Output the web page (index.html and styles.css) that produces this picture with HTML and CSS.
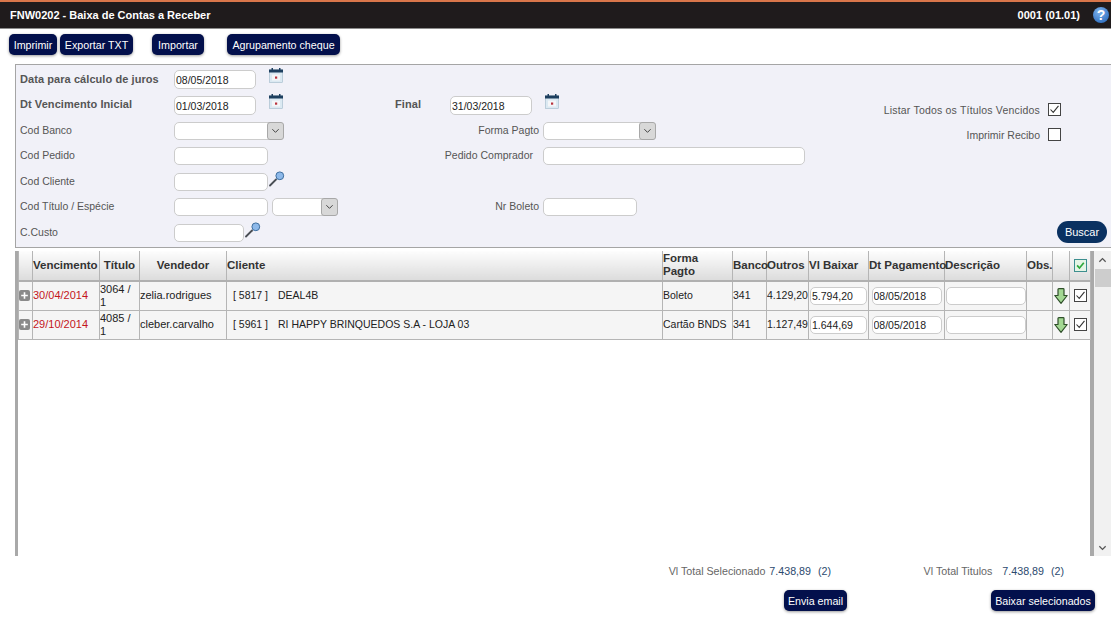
FILE: index.html
```html
<!DOCTYPE html>
<html lang="pt-BR">
<head>
<meta charset="UTF-8">
<meta name="viewport" content="width=device-width, initial-scale=1.0">
<title>FNW0202 - Baixa de Contas a Receber</title>
<link rel="stylesheet" href="styles.css">
</head>
<body>
<svg class="sprites" width="0" height="0">
    <symbol id="i-cal" viewBox="0 0 14 15">
        <rect x="0.5" y="2" width="13" height="12.5" fill="#dbe9f2" stroke="#9fb8c8" stroke-width="0.6"/>
        <rect x="0" y="1.5" width="14" height="3" fill="#1d3f5f"/>
        <rect x="2.5" y="0" width="1.5" height="2" fill="#1d3f5f"/>
        <rect x="10" y="0" width="1.5" height="2" fill="#1d3f5f"/>
        <rect x="3" y="6.5" width="8" height="6" fill="#f4f6f8"/>
        <rect x="6" y="8.5" width="2.2" height="2.2" fill="#b8323c"/>
    </symbol>
    <symbol id="i-lupa" viewBox="0 0 16 16">
        <path d="M1 14.5 L7 8.5" stroke="#4a4f55" stroke-width="1.8" stroke-linecap="round"/>
        <circle cx="10.8" cy="4.8" r="3.9" fill="#8db9ea" stroke="#3f6f9f" stroke-width="1"/>
    </symbol>
    <symbol id="i-check" viewBox="0 0 13 13">
        <path d="M1.8 6.5 L5 10 L11.2 2.2" fill="none" stroke="#333" stroke-width="1.3"/>
    </symbol>
    <symbol id="i-check-green" viewBox="0 0 13 13">
        <path d="M2.5 6.3 L5.3 9.4 L10.4 3.2" fill="none" stroke="#2fa83a" stroke-width="2"/>
    </symbol>
    <symbol id="i-down" viewBox="0 0 14 16">
        <path d="M4 1.5 Q4 0.7 4.8 0.7 H9.2 Q10 0.7 10 1.5 V7.5 H13.2 L7 15.3 L0.8 7.5 H4 Z" fill="#a3d893" stroke="#2f4f2a" stroke-width="1.2" stroke-linejoin="round"/>
    </symbol>
    <symbol id="i-plus" viewBox="0 0 11 11">
        <rect width="11" height="11" rx="2" fill="#8a8a8a"/>
        <path d="M5.5 2.2 V8.8 M2.2 5.5 H8.8" stroke="#fff" stroke-width="1.6"/>
    </symbol>
</svg>

<header class="topbar">
    <span class="topbar-title">FNW0202 - Baixa de Contas a Receber</span>
    <span class="topbar-right">
        <span>0001 (01.01)</span>
        <span class="help">?</span>
    </span>
</header>

<div class="toolbar">
    <button class="btn w-imprimir">Imprimir</button>
    <button class="btn w-exportar">Exportar TXT</button>
    <button class="btn gap-a">Importar</button>
    <button class="btn gap-b">Agrupamento cheque</button>
</div>

<section class="filters">
    <div class="form">
        <div class="row">
            <label class="lbl strong">Data para cálculo de juros</label>
            <input class="inp w-date" type="text" value="08/05/2018">
            <svg class="ico-cal"><use href="#i-cal"/></svg>
        </div>
        <div class="row">
            <label class="lbl strong">Dt Vencimento Inicial</label>
            <input class="inp w-date" type="text" value="01/03/2018">
            <svg class="ico-cal"><use href="#i-cal"/></svg>
            <label class="lbl-final strong">Final</label>
            <input class="inp w-date" type="text" value="31/03/2018">
            <svg class="ico-cal"><use href="#i-cal"/></svg>
        </div>
        <div class="row">
            <label class="lbl">Cod Banco</label>
            <span class="cell-left">
                <span class="combo w-combo"><select></select><span class="combo-btn"><svg viewBox="0 0 10 6"><path d="M1.5 1 L5 4.5 L8.5 1" fill="none" stroke="#333"/></svg></span></span>
            </span>
            <label class="lbl-right">Forma Pagto</label>
            <span class="combo w-combo-2"><select></select><span class="combo-btn"><svg viewBox="0 0 10 6"><path d="M1.5 1 L5 4.5 L8.5 1" fill="none" stroke="#333"/></svg></span></span>
        </div>
        <div class="row">
            <label class="lbl">Cod Pedido</label>
            <span class="cell-left"><input class="inp w-code" type="text"></span>
            <label class="lbl-right pad-10">Pedido Comprador</label>
            <input class="inp w-wide" type="text">
        </div>
        <div class="row">
            <label class="lbl">Cod Cliente</label>
            <input class="inp w-code" type="text">
            <svg class="ico-lupa"><use href="#i-lupa"/></svg>
        </div>
        <div class="row">
            <label class="lbl">Cod Título / Espécie</label>
            <span class="cell-left">
                <input class="inp w-code" type="text">
                <span class="combo w-combo-3"><select></select><span class="combo-btn"><svg viewBox="0 0 10 6"><path d="M1.5 1 L5 4.5 L8.5 1" fill="none" stroke="#333"/></svg></span></span>
            </span>
            <label class="lbl-right">Nr Boleto</label>
            <input class="inp w-code" type="text">
        </div>
        <div class="row">
            <label class="lbl">C.Custo</label>
            <input class="inp w-cc" type="text">
            <svg class="ico-lupa"><use href="#i-lupa"/></svg>
        </div>
    </div>
    <div class="side">
        <div class="side-row">
            <span class="wide-text">Listar Todos os Títulos Vencidos</span>
            <span class="chk"><svg><use href="#i-check"/></svg></span>
        </div>
        <div class="side-row">
            <span>Imprimir Recibo</span>
            <span class="chk"></span>
        </div>
        <button class="btn-buscar">Buscar</button>
    </div>
</section>

<section class="grid-area">
    <div class="grid-box">
        <table class="grid">
            <colgroup>
                <col class="c-exp"><col class="c-venc"><col class="c-tit"><col class="c-vend"><col class="c-cli">
                <col class="c-forma"><col class="c-banco"><col class="c-outros"><col class="c-baixar"><col class="c-dt">
                <col class="c-desc"><col class="c-obs"><col class="c-seta"><col class="c-sel">
            </colgroup>
            <thead>
                <tr>
                    <th></th>
                    <th>Vencimento</th>
                    <th class="center">Título</th>
                    <th class="center">Vendedor</th>
                    <th>Cliente</th>
                    <th class="wrap">Forma Pagto</th>
                    <th>Banco</th>
                    <th>Outros</th>
                    <th>Vl Baixar</th>
                    <th>Dt Pagamento</th>
                    <th>Descrição</th>
                    <th>Obs.</th>
                    <th></th>
                    <th class="center"><span class="chk chk-head"><svg><use href="#i-check-green"/></svg></span></th>
                </tr>
            </thead>
            <tbody>
                <tr>
                    <td class="center"><svg class="ico-plus"><use href="#i-plus"/></svg></td>
                    <td class="late big">30/04/2014</td>
                    <td class="big">3064 / 1</td>
                    <td class="big">zelia.rodrigues</td>
                    <td class="cli"><span class="cli-cod">[ 5817 ]</span>DEAL4B</td>
                    <td>Boleto</td>
                    <td>341</td>
                    <td>4.129,20</td>
                    <td class="center"><input class="inp inp-cell w-baixar" type="text" value="5.794,20"></td>
                    <td class="center"><input class="inp inp-cell w-dtpag" type="text" value="08/05/2018"></td>
                    <td class="center"><input class="inp inp-cell w-desc" type="text"></td>
                    <td></td>
                    <td class="center"><svg class="ico-down"><use href="#i-down"/></svg></td>
                    <td class="center"><span class="chk"><svg><use href="#i-check"/></svg></span></td>
                </tr>
                <tr>
                    <td class="center"><svg class="ico-plus"><use href="#i-plus"/></svg></td>
                    <td class="late big">29/10/2014</td>
                    <td class="big">4085 / 1</td>
                    <td class="big">cleber.carvalho</td>
                    <td class="cli"><span class="cli-cod">[ 5961 ]</span>RI HAPPY BRINQUEDOS S.A - LOJA 03</td>
                    <td>Cartão BNDS</td>
                    <td>341</td>
                    <td>1.127,49</td>
                    <td class="center"><input class="inp inp-cell w-baixar" type="text" value="1.644,69"></td>
                    <td class="center"><input class="inp inp-cell w-dtpag" type="text" value="08/05/2018"></td>
                    <td class="center"><input class="inp inp-cell w-desc" type="text"></td>
                    <td></td>
                    <td class="center"><svg class="ico-down"><use href="#i-down"/></svg></td>
                    <td class="center"><span class="chk"><svg><use href="#i-check"/></svg></span></td>
                </tr>
            </tbody>
        </table>
    </div>
    <div class="scrollbar">
        <span class="scroll-arrow"><svg viewBox="0 0 10 6"><path d="M1.5 5 L5 1.5 L8.5 5" fill="none" stroke="#555" stroke-width="1.4"/></svg></span>
        <span class="scroll-thumb"></span>
        <span class="scroll-arrow to-bottom"><svg viewBox="0 0 10 6"><path d="M1.5 1 L5 4.5 L8.5 1" fill="none" stroke="#555" stroke-width="1.4"/></svg></span>
    </div>
</section>

<footer class="totals">
    <div class="totals-col col-a">
        <div class="total-line">
            <span>Vl Total Selecionado</span>
            <span class="val">7.438,89</span>
            <span class="val qty">(2)</span>
        </div>
        <button class="btn btn-email">Envia email</button>
    </div>
    <div class="totals-col col-b">
        <div class="total-line">
            <span>Vl Total Titulos</span>
            <span class="val val-b">7.438,89</span>
            <span class="val qty">(2)</span>
        </div>
        <button class="btn btn-baixar">Baixar selecionados</button>
    </div>
</footer>
</body>
</html>
```

FILE: styles.css
```css
body {
    font-family: "Liberation Sans", Arial, sans-serif;
    font-size: 10.5px;
    color: #555;
    background-color: #fff;
    margin: 0;
    padding: 0;
    height: 630px;
    overflow: hidden;
}
.sprites {
    display: block;
    height: 0;
}
button {
    font-family: inherit;
}

/* top bar */
.topbar {
    box-sizing: border-box;
    height: 29px;
    display: flex;
    justify-content: space-between;
    align-items: center;
    padding: 0 2px 0 10px;
    background-color: #1f1b1c;
    border-top: 2px solid #d9764a;
    border-bottom: 1px solid #8c8c8c;
    color: #fff;
    font-size: 11px;
    font-weight: bold;
}
.topbar-right {
    display: flex;
    align-items: center;
    gap: 13px;
}
.help {
    width: 16px;
    height: 16px;
    border-radius: 50%;
    background: radial-gradient(circle at 40% 30%, #7fb4ee, #1d5fb4);
    color: #fff;
    font-size: 14px;
    line-height: 16px;
    text-align: center;
}

/* toolbar */
.toolbar {
    display: flex;
    gap: 3px;
    padding: 5px 9px 0;
    height: 30px;
    box-sizing: border-box;
}
.btn {
    height: 21px;
    padding: 0;
    border: none;
    border-radius: 5px;
    background-color: #03104c;
    color: #fff;
    font-size: 10.7px;
    white-space: nowrap;
    box-shadow: 0 1px 3px rgba(0, 0, 0, 0.4);
}
.w-imprimir {
    width: 48px;
}
.w-exportar {
    width: 73px;
}
.gap-a {
    margin-left: 16px;
    width: 52px;
}
.gap-b {
    margin-left: 20px;
    width: 113px;
}

/* filters */
.filters {
    box-sizing: border-box;
    height: 184px;
    margin: 5px 0 0 15px;
    padding: 2px 4px 4px 4px;
    display: flex;
    justify-content: space-between;
    background-color: #f1f1f8;
    border: 1px solid #a5a5a5;
    border-right: none;
}
.form {
    display: flex;
    flex-direction: column;
}
.row {
    display: flex;
    align-items: center;
    height: 25.5px;
    flex: none;
}
.lbl {
    width: 154px;
    flex: none;
    padding-bottom: 2px;
}
.strong {
    font-size: 11px;
    font-weight: bold;
    letter-spacing: 0.07px;
}
.cell-left {
    width: 205px;
    flex: none;
    display: flex;
    gap: 4px;
}
.lbl-right {
    width: 164px;
    flex: none;
    text-align: right;
    padding: 0 4px 2px 0;
    box-sizing: border-box;
}
.lbl-right.pad-10 {
    padding-right: 10px;
}
.lbl-final {
    margin-left: 112px;
    width: 55px;
    flex: none;
    padding-bottom: 2px;
}
.inp {
    box-sizing: border-box;
    height: 18px;
    margin: 0;
    padding: 1px 1px 0;
    border: 1px solid #ccc;
    border-radius: 5px;
    background-color: #fff;
    color: #222;
    font-family: inherit;
    font-size: 10.5px;
    outline: none;
}
.w-date {
    width: 82px;
    height: 19px;
}
.w-code {
    width: 94px;
}
.w-cc {
    width: 70px;
}
.w-wide {
    width: 262px;
}
.ico-cal {
    width: 14px;
    height: 15px;
    margin: -8px 0 0 13px;
    flex: none;
}
.ico-lupa {
    width: 16px;
    height: 16px;
    margin: -5px 0 0 1px;
    flex: none;
}
.combo {
    box-sizing: border-box;
    height: 18px;
    display: flex;
    border: 1px solid #ccc;
    border-radius: 5px;
    background-color: #fff;
}
.combo select {
    flex: 1;
    min-width: 0;
    border: none;
    background: none;
    appearance: none;
}
.combo-btn {
    box-sizing: border-box;
    width: 17px;
    margin: -1px -1px -1px 0;
    display: flex;
    align-items: center;
    justify-content: center;
    background-color: #d8d8d8;
    border: 1px solid #a8a8a8;
    border-radius: 3px;
}
.combo-btn svg {
    width: 9px;
    height: 6px;
}
.w-combo {
    width: 110px;
}
.w-combo-2 {
    width: 113px;
}
.w-combo-3 {
    width: 66px;
}

/* right side of the filters */
.side {
    display: flex;
    flex-direction: column;
    align-items: flex-end;
    padding-top: 30px;
}
.side-row {
    display: flex;
    align-items: center;
    gap: 8px;
    height: 25px;
    margin-right: 46px;
}
.wide-text {
    letter-spacing: 0.19px;
}
.chk {
    box-sizing: border-box;
    display: inline-block;
    width: 13px;
    height: 13px;
    border: 1px solid #444;
    background-color: #fff;
    vertical-align: middle;
}
.chk svg {
    display: block;
    width: 11px;
    height: 11px;
}
.chk-head {
    border-color: #3d8f8f;
    background-color: #e6f5e6;
}
.btn-buscar {
    margin-top: auto;
    width: 50px;
    height: 22px;
    border: none;
    border-radius: 11px;
    background-color: #0a3161;
    color: #fff;
    font-size: 11px;
}

/* grid */
.grid-area {
    display: flex;
    height: 305px;
    margin: 3px 0 0 15px;
}
.grid-box {
    box-sizing: border-box;
    width: 1079px;
    border-left: 3px solid #a9a9a9;
    border-right: 4px solid #a9a9a9;
}
.grid {
    width: 1072px;
    table-layout: fixed;
    border-collapse: collapse;
}
.c-exp { width: 14px; }
.c-venc { width: 67px; }
.c-tit { width: 40px; }
.c-vend { width: 87px; }
.c-cli { width: 436px; }
.c-forma { width: 70px; }
.c-banco { width: 34px; }
.c-outros { width: 42px; }
.c-baixar { width: 60px; }
.c-dt { width: 76px; }
.c-desc { width: 82px; }
.c-obs { width: 26px; }
.c-seta { width: 17px; }
.c-sel { width: 21px; }
.grid th {
    height: 28px;
    padding: 0 0 1px;
    font-size: 11.5px;
    line-height: 13px;
    color: #333;
    text-align: left;
    white-space: nowrap;
    background: linear-gradient(#fdfdfd, #dcdcdc);
    border-left: 1px solid #b5b5b5;
    border-right: 1px solid #b5b5b5;
    border-bottom: 2px solid #b0b0b0;
}
.grid th.wrap {
    white-space: normal;
}
.grid td {
    height: 27px;
    padding: 0 0 1px;
    font-size: 10.5px;
    line-height: 13px;
    color: #222;
    background-color: #f5f5f5;
    border: 1px solid #b5b5b5;
    white-space: normal;
    overflow: hidden;
}
.grid .center {
    text-align: center;
}
.grid .big {
    font-size: 11px;
}
.grid .late {
    color: #c4161c;
}
.grid .cli {
    padding-left: 6px;
}
.cli-cod {
    margin-right: 10px;
}
.inp-cell {
    display: block;
    margin: 0 auto;
}
.w-baixar {
    width: 57px;
}
.w-dtpag {
    width: 70px;
}
.w-desc {
    width: 80px;
}
.ico-plus {
    display: block;
    width: 11px;
    height: 11px;
    margin: 0;
}
.ico-down {
    display: block;
    width: 14px;
    height: 16px;
    margin: 0 auto;
}

/* scrollbar */
.scrollbar {
    width: 17px;
    display: flex;
    flex-direction: column;
    background-color: #f1f1f1;
}
.scroll-arrow {
    height: 17px;
    display: flex;
    align-items: center;
    justify-content: center;
}
.scroll-arrow svg {
    width: 9px;
    height: 6px;
}
.scroll-thumb {
    height: 18px;
    margin: 1px 0 0 1px;
    background-color: #cdcdcd;
}
.to-bottom {
    margin-top: auto;
}

/* totals */
.totals {
    display: flex;
    justify-content: flex-end;
    padding: 9px 16px 0 0;
}
.totals-col {
    display: flex;
    flex-direction: column;
    align-items: flex-end;
}
.col-a {
    width: 180px;
    margin-right: 76px;
}
.col-b {
    width: 172px;
}
.total-line {
    display: flex;
    height: 13px;
    font-size: 10.7px;
    line-height: 13px;
    color: #666;
    white-space: nowrap;
    margin-bottom: 12px;
}
.col-a .total-line {
    margin-right: 16px;
}
.col-b .total-line {
    margin-right: 31px;
}
.val {
    color: #2c4a6e;
    margin-left: 4px;
}
.val-b {
    margin-left: 10px;
}
.qty {
    margin-left: 7px;
}
.btn-email {
    width: 63px;
}
.btn-baixar {
    width: 104px;
}
```
